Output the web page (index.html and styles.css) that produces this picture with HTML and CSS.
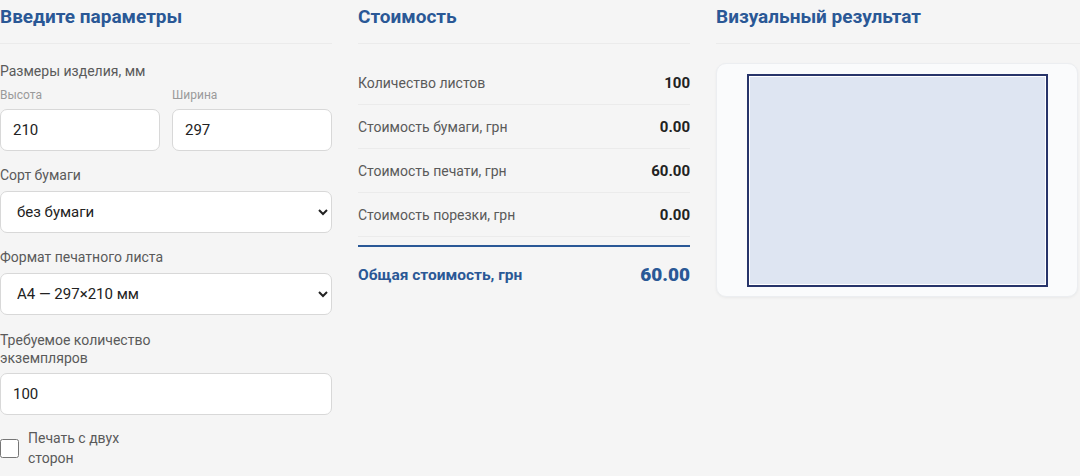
FILE: index.html
```html
<!DOCTYPE html>
<html lang="ru">
<head>
    <meta charset="UTF-8">
    <meta name="viewport" content="width=device-width, initial-scale=1.0">
    <title>Калькулятор печати</title>
    <link rel="stylesheet" href="styles.css">
</head>
<body>
    <div class="calc">
        <!-- Параметры -->
        <section class="col">
            <h2>Введите параметры</h2>
            <div class="col-body">
                <div class="form-group">
                    <label>Размеры изделия, мм</label>
                    <div class="size-row">
                        <div>
                            <span class="sub-label">Высота</span>
                            <input type="text" value="210">
                        </div>
                        <div>
                            <span class="sub-label">Ширина</span>
                            <input type="text" value="297">
                        </div>
                    </div>
                </div>
                <div class="form-group">
                    <label for="paper">Сорт бумаги</label>
                    <select id="paper">
                        <option>без бумаги</option>
                    </select>
                </div>
                <div class="form-group">
                    <label for="format">Формат печатного листа</label>
                    <select id="format">
                        <option>А4 — 297×210 мм</option>
                    </select>
                </div>
                <div class="form-group">
                    <label for="qty" class="narrow">Требуемое количество экземпляров</label>
                    <input type="text" id="qty" value="100">
                </div>
                <div class="check-row">
                    <input type="checkbox" id="duplex">
                    <label for="duplex">Печать с двух сторон</label>
                </div>
            </div>
        </section>

        <!-- Стоимость -->
        <section class="col">
            <h2>Стоимость</h2>
            <div class="col-body">
                <div class="cost-row"><span>Количество листов</span><b>100</b></div>
                <div class="cost-row"><span>Стоимость бумаги, грн</span><b>0.00</b></div>
                <div class="cost-row"><span>Стоимость печати, грн</span><b>60.00</b></div>
                <div class="cost-row"><span>Стоимость порезки, грн</span><b>0.00</b></div>
                <div class="cost-total"><span>Общая стоимость, грн</span><b>60.00</b></div>
            </div>
        </section>

        <!-- Результат -->
        <section class="col">
            <h2>Визуальный результат</h2>
            <div class="col-body">
                <div class="preview">
                    <div class="sheet"></div>
                </div>
            </div>
        </section>
    </div>
</body>
</html>
```

FILE: styles.css
```css
* {
    margin: 0;
    padding: 0;
    box-sizing: border-box;
}

body {
    background: #f5f5f5;
    font-family: Roboto, "Liberation Sans", Arial, sans-serif;
    color: #222;
}

.calc {
    display: grid;
    grid-template-columns: 332px 332px 1fr;
    column-gap: 26px;
}

.col h2 {
    font-size: 19px;
    font-weight: 700;
    line-height: 24px;
    color: #2a5896;
    padding: 5px 0 14px;
    border-bottom: 1px solid #ebebeb;
}

.col-body {
    padding-top: 17px;
}

/* form */
.form-group {
    margin-bottom: 14px;
}

.form-group > label {
    display: block;
    font-size: 14px;
    line-height: 20px;
    color: #5a5a5a;
    margin-bottom: 6px;
}

.form-group > label.narrow {
    max-width: 160px;
    line-height: 18px;
    padding-top: 2px;
    margin-bottom: 6px;
}

.size-row {
    display: grid;
    grid-template-columns: 1fr 1fr;
    column-gap: 12px;
}

.sub-label {
    display: block;
    font-size: 12px;
    line-height: 16px;
    color: #9a9a9a;
    margin-bottom: 6px;
}

input[type="text"],
select {
    display: block;
    width: 100%;
    height: 42px;
    padding: 0 12px;
    border: 1px solid #d8d8d8;
    border-radius: 7px;
    background: #fff;
    font-family: inherit;
    font-size: 15px;
    color: #222;
}

select {
    padding: 0 8px 0 12px;
}

.check-row {
    display: flex;
    align-items: center;
    gap: 9px;
    margin-top: -1px;
}

.check-row input {
    width: 19px;
    height: 19px;
    margin: 0;
    flex: none;
}

.check-row label {
    max-width: 110px;
    font-size: 14px;
    line-height: 20px;
    color: #5a5a5a;
}

/* cost table */
.cost-row,
.cost-total {
    display: flex;
    justify-content: space-between;
    align-items: center;
}

.cost-row {
    height: 44px;
    border-bottom: 1px solid #ebebeb;
    font-size: 14px;
    color: #5a5a5a;
}

.cost-row b {
    font-size: 15px;
    color: #222;
}

.cost-total {
    margin-top: 8px;
    border-top: 2px solid #2a5896;
    height: 57px;
    color: #2a5896;
    font-size: 15.5px;
    font-weight: 700;
}

.cost-total b {
    font-size: 19px;
}

/* preview */
.col-body .preview {
    margin-top: 2px;
    width: 362px;
    height: 234px;
    display: flex;
    justify-content: center;
    padding-top: 10px;
    background: #fafbfc;
    border: 1px solid #eceef1;
    border-radius: 10px;
    box-shadow: 0 1px 3px rgba(0, 0, 0, 0.05);
}

.sheet {
    width: 301px;
    height: 213px;
    background: #dee5f2;
    border: 2px solid #27346a;
    box-shadow: inset 0 0 0 1px #fff;
}
```
